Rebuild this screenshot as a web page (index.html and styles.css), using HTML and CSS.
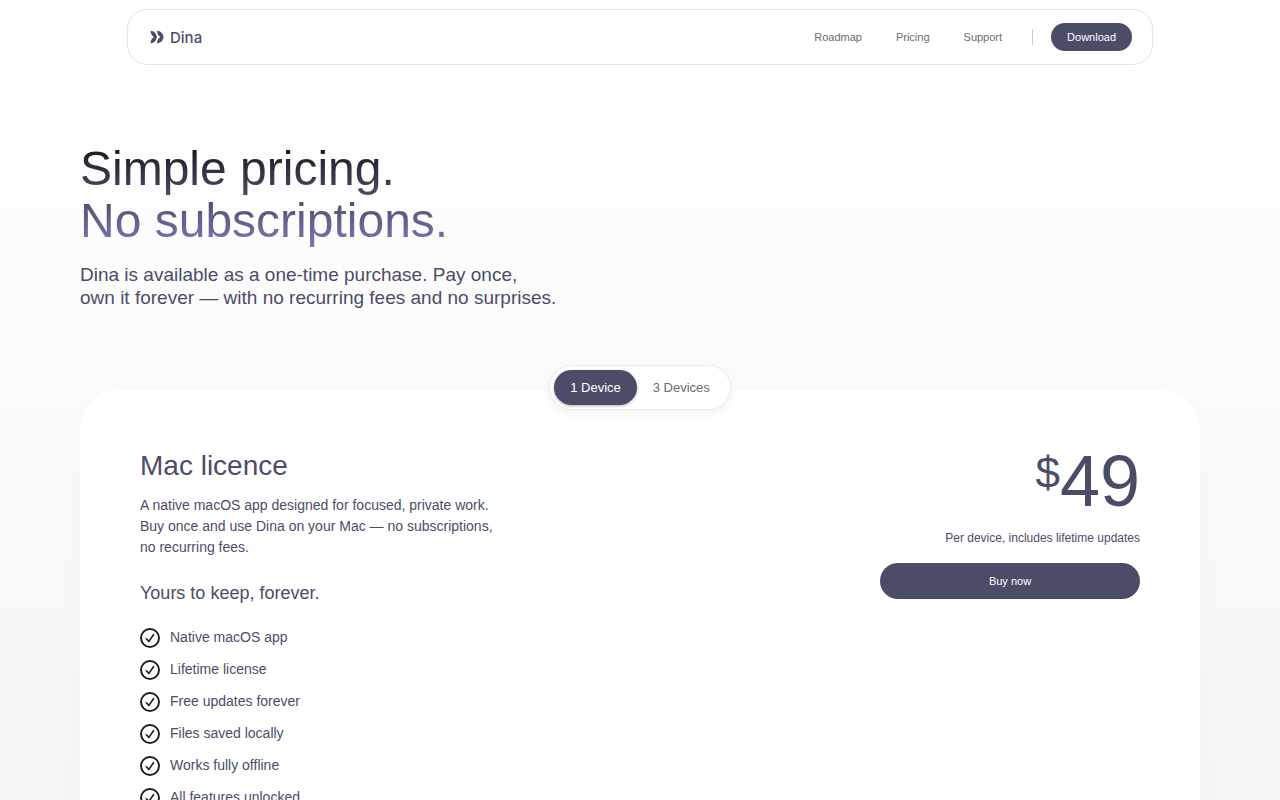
FILE: index.html
```
<!DOCTYPE html>
<html lang="en">
<head>
    <meta charset="UTF-8">
    <meta name="viewport" content="width=device-width, initial-scale=1.0">
    <title>Dina - Pricing</title>
    <link rel="stylesheet" href="styles.css">
</head>
<body>

    <!-- Shared check icon -->
    <svg class="sprite" width="0" height="0" aria-hidden="true">
        <symbol id="check" viewBox="0 0 20 20">
            <circle cx="10" cy="10" r="9" fill="none" stroke="currentColor" stroke-width="1.9"/>
            <path d="M6.300 10.800 8.900 13.400 13.500 6.700" fill="none" stroke="currentColor" stroke-width="1.6" stroke-linecap="round" stroke-linejoin="round"/>
        </symbol>
    </svg>

    <header class="navbar">
        <a class="brand" href="#">
            <svg class="logo" viewBox="0 0 14 14" aria-hidden="true">
                <path d="M.6 .7C4 .8 6.300 3.200 6.900 7C6.300 10.800 4 13.200 .6 13.300C.6 10 2 8.200 4 7C2 5.800 .6 4 .6 .7Z"/>
                <path d="M7.100 .7C10.500 .8 13 3.200 13.600 7C13 10.800 10.500 13.200 7.100 13.300C7.100 10 8.500 8.200 10.500 7C8.500 5.800 7.100 4 7.100 .7Z"/>
            </svg>
            <span>Dina</span>
        </a>
        <nav class="nav-links">
            <a href="#roadmap">Roadmap</a>
            <a href="#pricing">Pricing</a>
            <a href="#support">Support</a>
        </nav>
        <span class="divider"></span>
        <a class="download" href="#download">Download</a>
    </header>

    <main class="page">
        <section class="hero">
            <h1>Simple pricing.<br>No subscriptions.</h1>
            <p>Dina is available as a one-time purchase. Pay once,<br>own it forever — with no recurring fees and no surprises.</p>
        </section>

        <div class="switch">
            <button class="switch-btn active" type="button">1 Device</button>
            <button class="switch-btn" type="button">3 Devices</button>
        </div>

        <section class="card" id="pricing">
            <div class="details">
                <h2>Mac licence</h2>
                <p>A native macOS app designed for focused, private work.<br>Buy once and use Dina on your Mac — no subscriptions,<br>no recurring fees.</p>
                <h3>Yours to keep, forever.</h3>
                <ul class="features">
                    <li><svg><use href="#check"/></svg>Native macOS app</li>
                    <li><svg><use href="#check"/></svg>Lifetime license</li>
                    <li><svg><use href="#check"/></svg>Free updates forever</li>
                    <li><svg><use href="#check"/></svg>Files saved locally</li>
                    <li><svg><use href="#check"/></svg>Works fully offline</li>
                    <li><svg><use href="#check"/></svg>All features unlocked</li>
                </ul>
            </div>
            <div class="purchase">
                <div class="price"><span class="currency">$</span><span id="amount">49</span></div>
                <p>Per device, includes lifetime updates</p>
                <button class="buy" type="button">Buy now</button>
            </div>
        </section>
    </main>

    <script>
        const buttons = document.querySelectorAll('.switch-btn');

        buttons.forEach(button => {
            button.addEventListener('click', () => {
                buttons.forEach(b => b.classList.remove('active'));
                button.classList.add('active');
            });
        });
    </script>
</body>
</html>
```
FILE: styles.css
```
* {
    box-sizing: border-box;
}

body {
    margin: 0;
    min-height: 100vh;
    font-family: "Liberation Sans", Arial, sans-serif;
    color: #4b4d68;
    background: linear-gradient(#ffffff 0, #fbfbfb 350px, #f6f6f8 800px);
}

h1, h2, h3, p, ul {
    margin: 0;
    padding: 0;
    font-weight: 400;
}

a {
    color: inherit;
    text-decoration: none;
}

button {
    border: none;
    font-family: inherit;
    cursor: pointer;
}

.sprite {
    position: absolute;
}

/* Navigation */
.navbar {
    display: flex;
    align-items: center;
    width: 90%;
    max-width: 1026px;
    height: 56px;
    margin: 9px auto 0;
    padding: 0 20px 0 22px;
    border: 1px solid #e4e4e8;
    border-radius: 20px;
    background-color: #ffffff;
}

.brand {
    display: flex;
    align-items: center;
    gap: 6px;
    margin-right: auto;
    font-family: Inter, sans-serif;
    font-size: 15px;
    font-weight: 500;
}

.logo {
    width: 14px;
    height: 14px;
    fill: currentColor;
}

.nav-links {
    display: flex;
    gap: 34px;
    font-size: 11px;
    color: #6b6b72;
}

.divider {
    width: 1px;
    height: 16px;
    margin: 0 18px 0 30px;
    background-color: #c8c8ce;
}

.download {
    padding: 0 16px;
    border-radius: 14px;
    background-color: #4b4d68;
    color: #ffffff;
    font-size: 11px;
    line-height: 28px;
}

/* Page */
.page {
    max-width: 1200px;
    margin: 0 auto;
    padding: 0 40px;
}

.hero {
    padding-top: 78px;
}

.hero h1 {
    width: fit-content;
    font-size: 48px;
    line-height: 52px;
    background: linear-gradient(#14141a 0, #4b4b62 50%, #7a78b4 100%);
    -webkit-background-clip: text;
    background-clip: text;
    color: transparent;
}

.hero p {
    margin-top: 16px;
    font-size: 19px;
    line-height: 23px;
}

/* Device switch, sits over the top edge of the card */
.switch {
    position: relative;
    display: flex;
    width: fit-content;
    margin: 56px auto -20px;
    padding: 4px;
    border: 1px solid #ebebed;
    border-radius: 23px;
    background-color: #ffffff;
    box-shadow: 0 4px 12px rgba(0, 0, 0, 0.05);
}

.switch-btn {
    height: 35px;
    padding: 0 16px;
    border-radius: 18px;
    background-color: transparent;
    color: #6b6b6b;
    font-size: 13px;
}

    .switch-btn.active {
        background-color: #4b4d68;
        color: #ffffff;
        box-shadow: 0 1px 3px rgba(0, 0, 0, 0.3);
    }

/* Price card */
.card {
    display: flex;
    justify-content: space-between;
    gap: 40px;
    padding: 60px;
    border-radius: 40px;
    background-color: #ffffff;
    box-shadow: 0 10px 30px rgba(0, 0, 0, 0.02);
}

.details h2 {
    font-size: 28px;
    line-height: 32px;
}

.details p {
    margin-top: 13px;
    font-size: 14px;
    line-height: 21px;
}

.details h3 {
    margin-top: 23px;
    font-size: 18px;
    line-height: 24px;
}

.features {
    display: flex;
    flex-direction: column;
    gap: 12px;
    margin-top: 23px;
    list-style: none;
}

    .features li {
        display: flex;
        gap: 10px;
        height: 20px;
        font-size: 14px;
        line-height: 18px;
    }

    .features svg {
        width: 20px;
        height: 20px;
        color: #1c1c1e;
    }

.purchase {
    width: 260px;
    text-align: right;
}

.price {
    display: flex;
    justify-content: flex-end;
    align-items: flex-start;
    font-size: 72px;
    line-height: 62px;
}

.currency {
    font-size: 44px;
    line-height: 46px;
}

.purchase p {
    margin-top: 18px;
    font-size: 12px;
    line-height: 16px;
}

.buy {
    width: 100%;
    height: 36px;
    margin-top: 17px;
    border-radius: 18px;
    background-color: #4b4d68;
    color: #ffffff;
    font-size: 11px;
}
```
